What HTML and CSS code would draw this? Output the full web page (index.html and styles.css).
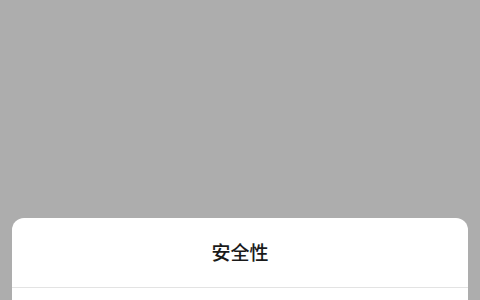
FILE: index.html
```html
<!DOCTYPE html>
<html lang="zh">
<head>
<meta charset="utf-8">
<link rel="stylesheet" href="styles.css">
</head>
<body>
<div class="overlay">
  <div class="sheet">
    <div class="sheet-title">安全性</div>
    <div class="sheet-body"></div>
  </div>
</div>
</body>
</html>
```
FILE: styles.css
```css
html, body {
  margin: 0;
  padding: 0;
  width: 480px;
  height: 300px;
  overflow: hidden;
}
body {
  background: #adadad;
  font-family: "Noto Sans CJK SC", "Noto Sans", sans-serif;
}
.overlay {
  height: 300px;
  display: flex;
  flex-direction: column;
  justify-content: flex-end;
  padding: 0 12px;
  box-sizing: border-box;
}
.sheet {
  background: #fff;
  border-radius: 12px 12px 0 0;
  height: 82px;
  display: flex;
  flex-direction: column;
}
.sheet-title {
  height: 70px;
  flex: none;
  display: flex;
  align-items: center;
  justify-content: center;
  font-size: 19px;
  font-weight: 500;
  color: #1a1a1a;
  border-bottom: 1px solid #e3e3e3;
  box-sizing: border-box;
  padding-bottom: 2px;
}
.sheet-body {
  flex: 1;
}
```
